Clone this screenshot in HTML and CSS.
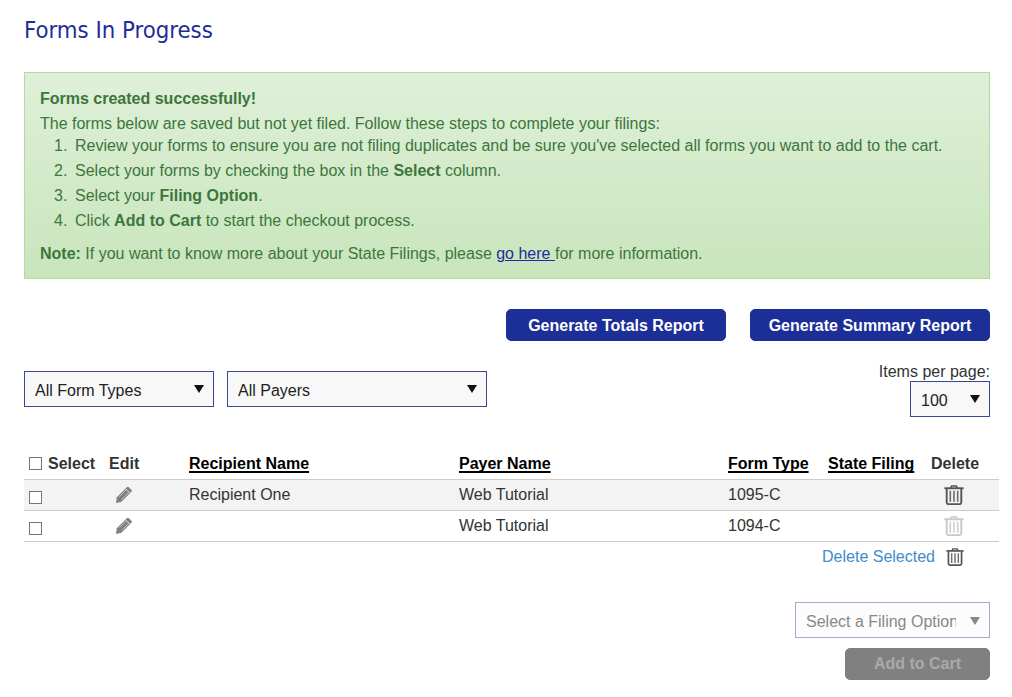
FILE: index.html
```html
<!DOCTYPE html>
<html lang="en">
<head>
<meta charset="utf-8">
<title>Forms In Progress</title>
<link rel="stylesheet" href="styles.css">
</head>
<body>
<svg class="defs" width="0" height="0" aria-hidden="true">
  <symbol id="trash" viewBox="0 0 20 20">
    <path d="M6.800 3 7.500 1h5l.7 2" fill="none" stroke="currentColor" stroke-width="1.600"/>
    <path d="M.4 2.300h19.200v1.900H.4z" fill="currentColor"/>
    <path d="M2.700 4v13.300c0 1.100.7 1.800 1.600 1.800h11.400c.9 0 1.600-.7 1.600-1.800V4" fill="none" stroke="currentColor" stroke-width="1.900"/>
    <path d="M6.300 5.800v11M10 5.800v11M13.700 5.800v11" fill="none" stroke="currentColor" stroke-width="1.600" opacity=".85"/>
  </symbol>
  <symbol id="pencil" viewBox="0 0 16 16">
    <path d="M11 .5a1.200 1.200 0 0 1 1.600 0l3 3a1.200 1.200 0 0 1 0 1.600L5.400 15.300 0 16.500.8 10.800z" fill="currentColor"/>
    <path d="M3.200 10.300 10.300 3.200M5.700 12.800l7.100-7.100" stroke="#c4c4c4" stroke-width=".9" fill="none"/>
    <path d="M9.500 2.300l4.200 4.200" stroke="#e8e8e8" stroke-width=".9" fill="none"/>
  </symbol>
</svg>

<main class="page">
  <h1 class="title">Forms In Progress</h1>

  <section class="alert">
    <p class="alert-head"><strong>Forms created successfully!</strong></p>
    <p class="alert-intro">The forms below are saved but not yet filed. Follow these steps to complete your filings:</p>
    <ol class="steps">
      <li>Review your forms to ensure you are not filing duplicates and be sure you've selected all forms you want to add to the cart.</li>
      <li>Select your forms by checking the box in the <strong>Select</strong> column.</li>
      <li>Select your <strong>Filing Option</strong>.</li>
      <li>Click <strong>Add to Cart</strong> to start the checkout process.</li>
    </ol>
    <p class="alert-note"><strong>Note:</strong> If you want to know more about your State Filings, please <a href="#">go here </a>for more information.</p>
  </section>

  <div class="reports">
    <button class="btn btn-totals" type="button">Generate Totals Report</button>
    <button class="btn btn-summary" type="button">Generate Summary Report</button>
  </div>

  <div class="filters">
    <div class="filter-left">
      <div class="select select-types">
        <select><option>All Form Types</option></select>
      </div>
      <div class="select select-payers">
        <select><option>All Payers</option></select>
      </div>
    </div>
    <div class="per-page">
      <label class="per-label">Items per page:</label>
      <div class="select select-items">
        <select><option>100</option></select>
      </div>
    </div>
  </div>

  <table class="forms">
    <colgroup>
      <col class="c-select"><col class="c-edit"><col class="c-recipient"><col class="c-payer"><col class="c-type"><col class="c-state"><col class="c-delete">
    </colgroup>
    <thead>
      <tr>
        <th><input type="checkbox" class="check"><span class="th-select">Select</span></th>
        <th>Edit</th>
        <th><span class="sort">Recipient Name</span></th>
        <th><span class="sort">Payer Name</span></th>
        <th><span class="sort">Form Type</span></th>
        <th><span class="sort">State Filing</span></th>
        <th>Delete</th>
      </tr>
    </thead>
    <tbody>
      <tr class="shaded">
        <td><input type="checkbox" class="check"></td>
        <td class="cell-edit"><svg class="ico-pencil"><use href="#pencil"/></svg></td>
        <td>Recipient One</td>
        <td>Web Tutorial</td>
        <td>1095-C</td>
        <td></td>
        <td class="cell-del"><svg class="ico-trash"><use href="#trash"/></svg></td>
      </tr>
      <tr>
        <td><input type="checkbox" class="check"></td>
        <td class="cell-edit"><svg class="ico-pencil"><use href="#pencil"/></svg></td>
        <td></td>
        <td>Web Tutorial</td>
        <td>1094-C</td>
        <td></td>
        <td class="cell-del"><svg class="ico-trash faded"><use href="#trash"/></svg></td>
      </tr>
    </tbody>
  </table>

  <div class="delete-row">
    <a class="delete-link" href="#">Delete Selected</a>
    <svg class="ico-trash ico-trash-small"><use href="#trash"/></svg>
  </div>

  <div class="checkout">
    <div class="select select-filing">
      <select><option>Select a Filing Option</option></select>
    </div>
    <button class="btn btn-cart" type="button">Add to Cart</button>
  </div>
</main>
</body>
</html>
```
FILE: styles.css
```css
* { box-sizing: border-box; }
html, body { margin: 0; padding: 0; }
body {
  background: #fff;
  color: #333;
  font-family: "Liberation Sans", Arial, sans-serif;
  font-size: 16px;
  line-height: 20px;
}
.defs { position: absolute; }
.page {
  width: 990px;
  padding: 15px 0 0 24px;
}
.title {
  margin: 0 0 27px;
  height: 30px;
  color: #1c2e97;
  font-family: "DejaVu Sans Condensed", "DejaVu Sans", sans-serif;
  font-stretch: condensed;
  font-size: 23.7px;
  font-weight: 400;
  line-height: 30px;
}
.alert {
  height: 207px;
  padding: 16px 15px 0;
  border: 1px solid #b2dba1;
  background: linear-gradient(#dff0d8, #c8e5bc);
  color: #3c763d;
}
.alert p { margin: 0; }
.alert .alert-head { margin-bottom: 5px; }
.alert .alert-intro { margin-bottom: 2px; }
.steps {
  margin: 0 0 13px;
  padding-left: 35px;
  list-style: none;
  counter-reset: step;
}
.steps li { margin-bottom: 5px; counter-increment: step; }
.steps li:last-child { margin-bottom: 0; }
.steps li::before {
  content: counter(step) ".";
  display: inline-block;
  width: 21px;
  margin-left: -21px;
}
.alert a { color: #1c2e97; text-decoration: underline; }
.reports {
  display: flex;
  justify-content: flex-end;
  gap: 24px;
  margin-top: 30px;
}
.btn {
  height: 32px;
  border: 1px solid #1c2e97;
  border-radius: 5px;
  background: #1c2e97;
  color: #fff;
  font: 700 16px/20px "Liberation Sans", Arial, sans-serif;
  padding: 2px 0 0;
}
.btn-totals { width: 220px; }
.btn-summary { width: 240px; }
.filters {
  display: flex;
  justify-content: space-between;
  align-items: flex-start;
  margin-top: 30px;
  height: 46px;
}
.filter-left { display: flex; gap: 13px; }
.per-page {
  display: flex;
  flex-direction: column;
  align-items: flex-end;
  margin-top: -10px;
}
.per-label {
  display: block;
  height: 20px;
  line-height: 22px;
}
.select {
  position: relative;
  height: 36px;
}
.select select {
  display: block;
  width: 100%;
  height: 100%;
  padding: 2px 28px 0 10px;
  border: 1px solid #3a4799;
  border-radius: 0;
  background: #f8f8f8;
  color: #222;
  font: 16px "Liberation Sans", Arial, sans-serif;
  appearance: none;
  -webkit-appearance: none;
}
.select::after {
  content: "";
  position: absolute;
  top: 14px;
  right: 10px;
  border-left: 5px solid transparent;
  border-right: 5px solid transparent;
  border-top: 8px solid #111;
  pointer-events: none;
}
.select-types { width: 190px; }
.select-payers { width: 260px; }
.select-items { width: 80px; }
.forms {
  width: 975px;
  margin-top: 26px;
  border-collapse: collapse;
  table-layout: fixed;
}
.c-select { width: 85px; }
.c-edit { width: 80px; }
.c-recipient { width: 270px; }
.c-payer { width: 269px; }
.c-type { width: 100px; }
.c-state { width: 103px; }
.c-delete { width: 68px; }
.forms th {
  height: 36px;
  padding: 11px 0 4px;
  border-bottom: 1px solid #ccc;
  text-align: left;
  font-weight: 700;
  white-space: nowrap;
  vertical-align: middle;
}
.forms td {
  height: 31px;
  padding: 0;
  border-bottom: 1px solid #ccc;
  vertical-align: middle;
}
.shaded td { background: #f3f3f3; }
.check {
  width: 13px;
  height: 13px;
  margin: 0 0 0 5px;
  vertical-align: middle;
  appearance: none;
  -webkit-appearance: none;
  border: 1px solid #767676;
  background: #fff;
}
tbody .check { position: relative; top: 2px; }
thead .check { position: relative; top: -2px; }
.th-select { margin-left: 6px; }
.sort {
  color: #000;
  text-decoration: underline 2px #000;
  text-underline-offset: 2px;
  text-decoration-skip-ink: none;
}
.ico-pencil {
  display: block;
  width: 16px;
  height: 17px;
  margin-left: 7px;
  color: #808080;
}
.ico-trash {
  display: inline-block;
  width: 20px;
  height: 20px;
  color: #555;
  vertical-align: middle;
}
.ico-trash.faded { color: #c8c8c8; }
.ico-trash-small { width: 18px; }
.forms .cell-del { padding-left: 13px; }
.delete-row {
  display: flex;
  justify-content: flex-end;
  align-items: center;
  gap: 11px;
  height: 20px;
  margin-top: 5px;
  padding-right: 26px;
}
.delete-link { color: #428bca; text-decoration: none; }
.checkout {
  display: flex;
  flex-direction: column;
  align-items: flex-end;
  gap: 10px;
  margin-top: 35px;
}
.select-filing { width: 195px; }
.select-filing select {
  border-color: #a3a9cf;
  background: #fcfcfc;
  color: #888;
  padding: 4px 33px 0 10px;
}
.select-filing::after { top: 15px; border-top-color: #888; }
.btn-cart {
  width: 145px;
  padding-top: 0;
  border-color: #808080;
  background: #808080;
  color: #aaa;
}
```
